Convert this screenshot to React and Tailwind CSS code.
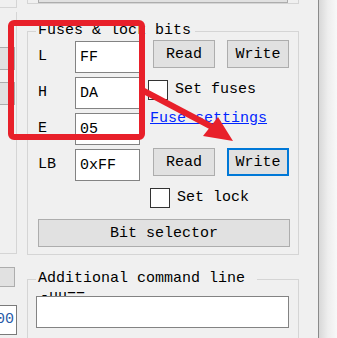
import React from "react";

const frame = "border-[#d5d5d5]";

function Btn({ children, className = "" }) {
  return (
    <button className={`flex items-center justify-center border border-[#adadad] bg-[#e1e1e1] text-[15px] leading-none text-black ${className}`}>
      {children}
    </button>
  );
}

function Check({ label, className = "" }) {
  return (
    <label className={`flex items-center ${className}`}>
      <span className="h-[20px] w-[20px] border border-[#333] bg-white" />
      <span className="ml-[7px] leading-[18px]">{label}</span>
    </label>
  );
}

const fuses = [
  ["L", "FF"],
  ["H", "DA"],
  ["E", "05"],
  ["LB", "0xFF"],
];

export default function App() {
  return (
    <div className="relative flex h-[338px] w-[337px] overflow-hidden bg-[#f0f0f0] font-['Liberation_Mono',monospace] text-[15px] text-black">
      {/* left column, cut off by the window edge */}
      <div className="flex w-[17px] shrink-0 flex-col">
        <div className={`h-[8px] border-r border-b ${frame}`} />
        <div className={`mt-[4px] h-[242px] border-r border-b ${frame} pt-[35px]`}>
          <div className="h-[23px] w-[15px] border-y border-r border-[#adadad] bg-[#e1e1e1]" />
          <div className="mt-[12px] h-[23px] w-[15px] border-y border-r border-[#adadad] bg-[#e1e1e1]" />
        </div>
        <div className="mt-[13px] h-[20px] w-[15px] border-y border-r border-[#adadad] bg-[#e1e1e1]" />
        <div className="mt-[18px] flex h-[30px] w-[17px] items-center justify-end overflow-hidden border-y border-r border-[#7a7a7a] bg-white pr-[2px] text-[#2a5aa8]">
          00
        </div>
      </div>

      {/* main column */}
      <div className="ml-[10px] flex w-[272px] shrink-0 flex-col">
        <div className={`h-[8px] border-x border-b ${frame} px-[10px]`}>
          <div className="h-[3px] border-x border-b border-[#adadad] bg-[#e1e1e1]" />
        </div>

        <fieldset className={`mt-[18px] border ${frame} pb-[7px] pl-[10px] pr-[8px]`}>
          <legend className="-ml-[2px] pl-[2px] pr-[4px] leading-[18px]">Fuses &amp; lock bits</legend>
          <div className="flex">
            <div className="flex flex-col gap-[4px] pt-[1px]">
              {fuses.map(([name, value]) => (
                <div key={name} className="flex items-center">
                  <span className="w-[37px]">{name}</span>
                  <input
                    readOnly
                    value={value}
                    className="h-[32px] w-[65px] border border-[#838383] bg-white pl-[4px] text-[15px] outline-none"
                  />
                </div>
              ))}
            </div>
            <div className="ml-[8px] flex flex-col">
              <div className="ml-[5px] flex gap-[12px]">
                <Btn className="h-[28px] w-[62px]">Read</Btn>
                <Btn className="h-[28px] w-[62px]">Write</Btn>
              </div>
              <Check label="Set fuses" className="mt-[12px]" />
              <a className="ml-[2px] mt-[10px] leading-[18px] text-[#0026ff] underline">Fuse settings</a>
              <div className="ml-[5px] mt-[20px] flex gap-[12px]">
                <Btn className="h-[28px] w-[62px]">Read</Btn>
                <button className="flex h-[28px] w-[62px] items-center justify-center border-2 border-[#0078d7] bg-[#e1e1e1] text-[15px] leading-none">
                  Write
                </button>
              </div>
              <Check label="Set lock" className="ml-[2px] mt-[12px]" />
            </div>
          </div>
          <Btn className="mt-[11px] h-[28px] w-full">Bit selector</Btn>
        </fieldset>

        <fieldset className={`mt-[15px] border ${frame} pb-[20px] pl-[8px] pr-[9px]`}>
          <legend className="pl-[2px] pr-[12px] leading-[18px]">Additional command line</legend>
          <div className="h-[8px] overflow-hidden pl-[4px] leading-[18px]">-uu==</div>
          <input readOnly className="h-[32px] w-full border border-[#838383] bg-white outline-none" />
        </fieldset>
      </div>

      {/* window edge and shadow */}
      <div className="w-[19px] shrink-0" />
      <div className="w-[1px] shrink-0 bg-[#8a8a8a]" />
      <div className="w-[18px] shrink-0 bg-linear-to-r from-[#d8d8d8] via-[#eeeeee] to-[#f8f8f8]" />

      {/* red annotation */}
      <svg className="pointer-events-none absolute inset-0" width="337" height="338" viewBox="0 0 337 338">
        <rect x="11" y="23" width="131" height="114" rx="3" fill="none" stroke="#e8202a" strokeWidth="6" />
        <line x1="142" y1="90" x2="214" y2="128" stroke="#e8202a" strokeWidth="6" />
        <polygon points="233,141 203,136 218,117" fill="#e8202a" />
      </svg>
    </div>
  );
}
